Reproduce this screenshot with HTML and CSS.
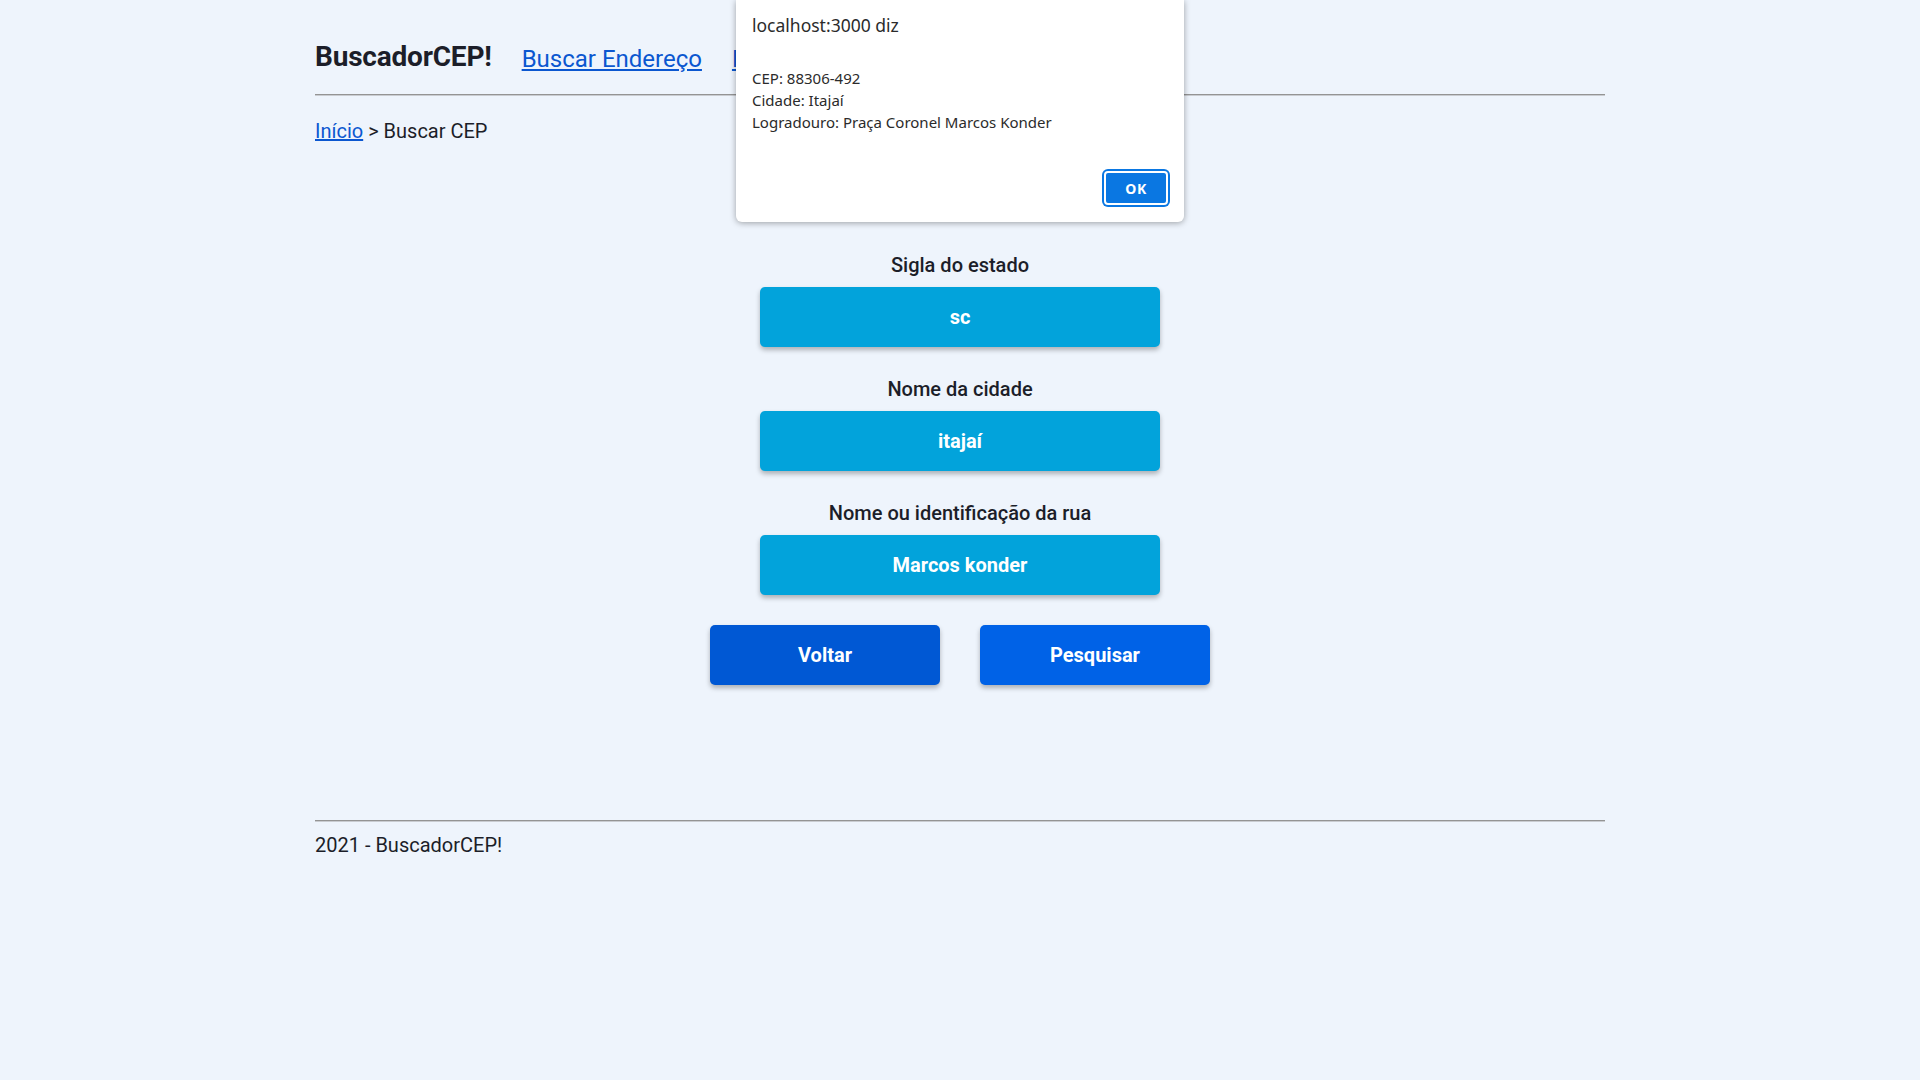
FILE: index.html
```html
<!DOCTYPE html>
<html lang="pt-BR">
<head>
<meta charset="utf-8">
<title>BuscadorCEP!</title>
<link rel="stylesheet" href="styles.css">
</head>
<body>
<div class="page">
  <header class="header">
    <h1 class="brand">BuscadorCEP!</h1>
    <nav class="nav">
      <a href="#" class="nav-link">Buscar Endereço</a>
      <a href="#" class="nav-link">Buscar CEP</a>
    </nav>
  </header>
  <hr class="rule">
  <div class="crumbs"><a href="#" class="crumb-link">Início</a> &gt; Buscar CEP</div>

  <main class="form">
    <div class="field">
      <label class="label">Sigla do estado</label>
      <div class="input">sc</div>
    </div>
    <div class="field">
      <label class="label">Nome da cidade</label>
      <div class="input">itajaí</div>
    </div>
    <div class="field">
      <label class="label">Nome ou identificação da rua</label>
      <div class="input">Marcos konder</div>
    </div>
    <div class="actions">
      <button class="btn btn-back">Voltar</button>
      <button class="btn btn-search">Pesquisar</button>
    </div>
  </main>

  <footer class="footer">
    <hr class="rule">
    <p class="footer-text">2021 - BuscadorCEP!</p>
  </footer>
</div>

<div class="dialog">
  <div class="dialog-title">localhost:3000 diz</div>
  <div class="dialog-body">
    <div>CEP: 88306-492</div>
    <div>Cidade: Itajaí</div>
    <div>Logradouro: Praça Coronel Marcos Konder</div>
  </div>
  <div class="dialog-actions"><button class="ok">OK</button></div>
</div>
</body>
</html>
```
FILE: styles.css
```css
* { box-sizing: border-box; }
html, body { margin: 0; padding: 0; }
body {
  background: #eef4fc;
  font-family: Roboto, "Liberation Sans", sans-serif;
  color: #1c1e29;
  min-height: 1080px;
}
.page {
  width: 1290px;
  margin: 0 auto;
}
.header {
  display: flex;
  align-items: flex-start;
  gap: 30px;
  padding-top: 40px;
}
.brand {
  margin: 0;
  font-size: 28px;
  font-weight: 700;
  line-height: 34px;
  letter-spacing: -0.2px;
}
.nav { display: flex; gap: 30px; padding-top: 2px; }
.nav-link {
  font-size: 24px;
  color: #0b57d0;
  text-decoration: underline;
  line-height: 34px;
}
.rule {
  margin: 0;
  border: 0;
  border-top: 1px solid #949494;
  border-bottom: 1px solid #c9ccd1;
  height: 0;
}
.header + .rule { margin-top: 18px; }
.crumbs {
  margin-top: 23px;
  font-size: 20px;
  line-height: 24px;
}
.crumb-link { color: #0b57d0; }
.form {
  display: flex;
  flex-direction: column;
  align-items: center;
  margin-top: 110px;
}
.field {
  display: flex;
  flex-direction: column;
  align-items: center;
  gap: 10px;
  margin-bottom: 30px;
}
.label {
  font-size: 20px;
  line-height: 24px;
  font-weight: 500;
}
.input {
  width: 400px;
  height: 60px;
  background: #02a3db;
  border-radius: 5px;
  box-shadow: 0 3px 5px rgba(0,0,0,0.28);
  color: #fff;
  font-size: 20px;
  font-weight: 700;
  display: flex;
  align-items: center;
  justify-content: center;
}
.actions {
  display: flex;
  gap: 40px;
}
.btn {
  width: 230px;
  height: 60px;
  border: 0;
  border-radius: 5px;
  color: #fff;
  font-family: Roboto, sans-serif;
  font-size: 20px;
  font-weight: 700;
  box-shadow: 0 3px 5px rgba(0,0,0,0.28);
}
.btn-back { background: #0058d4; }
.btn-search { background: #0062e7; }
.footer { margin-top: 135px; }
.footer-text {
  margin: 11px 0 0;
  font-size: 20px;
  line-height: 24px;
}

.dialog {
  position: absolute;
  top: 0;
  left: 736px;
  width: 448px;
  height: 222px;
  background: #fff;
  border-radius: 0 0 6px 6px;
  box-shadow: 0 1px 6px rgba(0,0,0,0.35);
  font-family: "Noto Sans", "DejaVu Sans", sans-serif;
  color: #2b2b2b;
  padding: 13px 16px 0;
}
.dialog-title {
  font-size: 17.5px;
  line-height: 24px;
}
.dialog-body {
  margin-top: 30px;
  font-size: 15px;
  line-height: 22px;
}
.dialog-actions {
  display: flex;
  justify-content: flex-end;
  margin-top: 38px;
}
.ok {
  width: 64px;
  height: 34px;
  background: #0a77e2;
  border: 2px solid #fff;
  box-shadow: 0 0 0 2px #0a77e2;
  border-radius: 4px;
  color: #fff;
  font-family: "Noto Sans", sans-serif;
  font-weight: 700;
  font-size: 14px;
  letter-spacing: 0.5px;
}
```
